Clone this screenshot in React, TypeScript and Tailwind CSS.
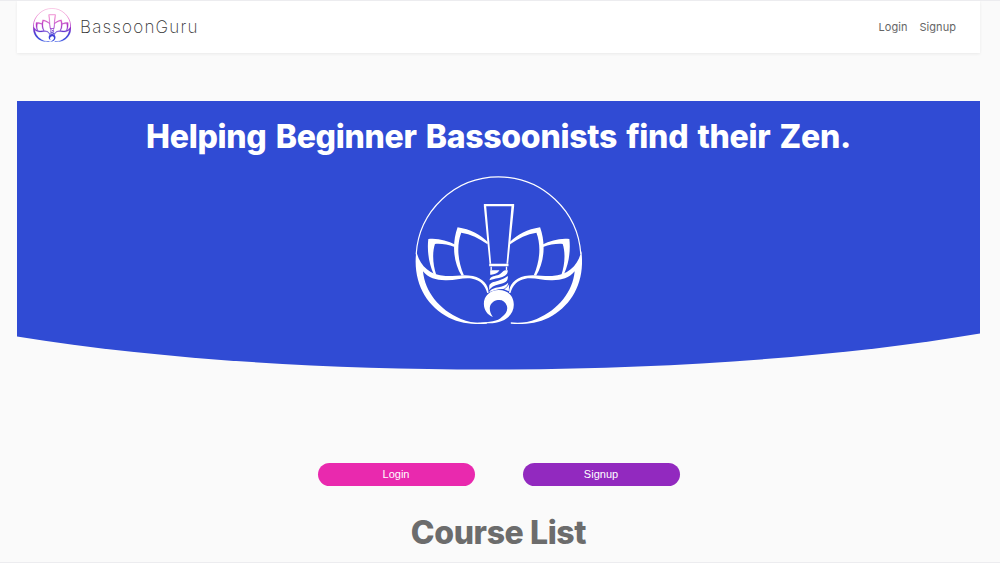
type MarkProps = { className: string; color: string; gradient?: boolean };

function LotusPetals() {
  return (
    <>
      <path d="M70 222 C100 219 126 227 152 239 L149 246 C128 239 108 235 90 237 C81 265 84 300 94 330 L86 327 C71 295 66 255 70 222 Z" />
      <path d="M158 187 C197 193 225 208 249 231 L248 238 C223 220 197 207 169 203 C154 242 159 290 177 331 L170 332 C144 290 141 234 158 187 Z" />
      <path d="M34 258 C43 300 72 330 122 333 C155 334 174 327 204 333 C235 340 252 361 251 384 L247 384 C241 361 226 345 202 341 C174 337 153 347 121 346 C93 345 70 339 54 319 C60 380 102 434 168 462 C195 473 222 475 246 472 L246 476 C212 480 167 475 132 458 C62 422 22 350 34 258 Z" />
    </>
  );
}

function LotusMark({ className, color, gradient }: MarkProps) {
  const paint = gradient ? "url(#brand)" : color;
  return (
    <svg className={className} viewBox="30 30 502 450" preserveAspectRatio="none" fill={paint} aria-hidden="true">
      <defs>
        <linearGradient id="brand" gradientUnits="userSpaceOnUse" x1="0" y1="34" x2="0" y2="475">
          <stop offset="0" stopColor="#f7b5dc" />
          <stop offset="0.3" stopColor="#e664c4" />
          <stop offset="0.55" stopColor="#a52bc5" />
          <stop offset="0.75" stopColor="#4b3bd2" />
          <stop offset="1" stopColor="#2949e0" />
        </linearGradient>
      </defs>
      <path d="M33.5 268 A248 248 0 0 1 528.5 268" fill="none" stroke={paint} strokeWidth={gradient ? 9 : 3.5} />
      <g stroke={paint} strokeWidth={gradient ? 4 : 0}>
        <LotusPetals />
        <g transform="matrix(-1 0 0 1 564 0)">
          <LotusPetals />
        </g>
        <path fillRule="evenodd" d="M237 117 H328 V124 L310 296 H305 L320 124 H244 L259 296 H254 L237 124 Z" />
      </g>
      <path d="M253 296 H311 V304 H253 Z M257 305 H261 V316 H257 Z M303 305 H307 V316 H303 Z" />
      <path d="M256 316 H284 C278 326 267 330 256 329 Z M254 346 C256 334 266 334 278 331 C291 328 292 317 302 316 H309 C309 331 297 336 282 339 C269 341 259 344 254 346 Z M253 363 C255 352 266 351 280 347 C295 343 301 338 309 333 C311 349 300 354 283 358 C268 361 258 368 253 375 Z M253 382 C259 371 269 369 282 367 C295 364 304 359 310 353 C310 363 302 369 295 372 C281 371 268 376 253 382 Z M313 358 L312 379 L298 373 C305 369 309 364 313 358 Z" />
      <path d="M282 375 C310 375 327 394 327 419 C327 448 302 475 252 475 L220 476 L220 473 C255 472 279 469 291 456 C304 447 310 435 306 422 C301 408 289 402 275 406 C254 412 248 434 264 456 C247 449 237 434 237 416 C237 393 256 375 282 375 Z" />
    </svg>
  );
}

export default function App() {
  return (
    <div className="flex h-[563px] flex-col overflow-hidden border-y border-y-[#ececef] bg-[#fafafa] pr-5 pl-[17px] font-['Inter',sans-serif]">
      <header className="flex h-[52px] shrink-0 items-center bg-white pr-6 pl-4 shadow-[0_1px_3px_rgba(0,0,0,0.07)]">
        <LotusMark className="mt-[-5px] h-[34px] w-[38px]" color="#4b3bd2" gradient />
        <span className="ml-[9px] text-[17px] leading-6 font-extralight tracking-[1.2px] whitespace-nowrap text-[#333]">BassoonGuru</span>
        <nav className="ml-auto flex gap-3 text-[11px] leading-4 text-[#666]">
          <a className="tracking-[0.05px]">Login</a>
          <a className="tracking-[0.05px]">Signup</a>
        </nav>
      </header>

      <section className="relative mt-12 flex h-[269px] shrink-0 flex-col items-center">
        <svg className="absolute inset-0 h-full w-full" viewBox="0 0 963 269" preserveAspectRatio="none" aria-hidden="true">
          <path d="M0 0 H963 V232.5 C690 279 280 281 0 235.5 Z" fill="#304bd4" />
        </svg>
        <h1 className="relative mt-4 text-[32px] leading-10 font-extrabold tracking-[-0.3px] [word-spacing:2.5px] whitespace-nowrap text-white">
          Helping Beginner Bassoonists find their Zen.
        </h1>
        <LotusMark className="relative mt-[18px] h-[150px] w-[167px]" color="#ffffff" />
      </section>

      <div className="mt-[93px] flex shrink-0 justify-center gap-12 font-['Liberation_Sans',sans-serif] text-[11px] leading-[23px] text-white">
        <button className="h-[23px] w-[157px] rounded-full bg-[#e929ae]">Login</button>
        <button className="h-[23px] w-[157px] rounded-full bg-[#9229bf]">Signup</button>
      </div>

      <h2 className="mt-[27px] text-center text-[32px] leading-10 font-extrabold tracking-[-0.4px] text-[#6c6c6c]">Course List</h2>
    </div>
  );
}
